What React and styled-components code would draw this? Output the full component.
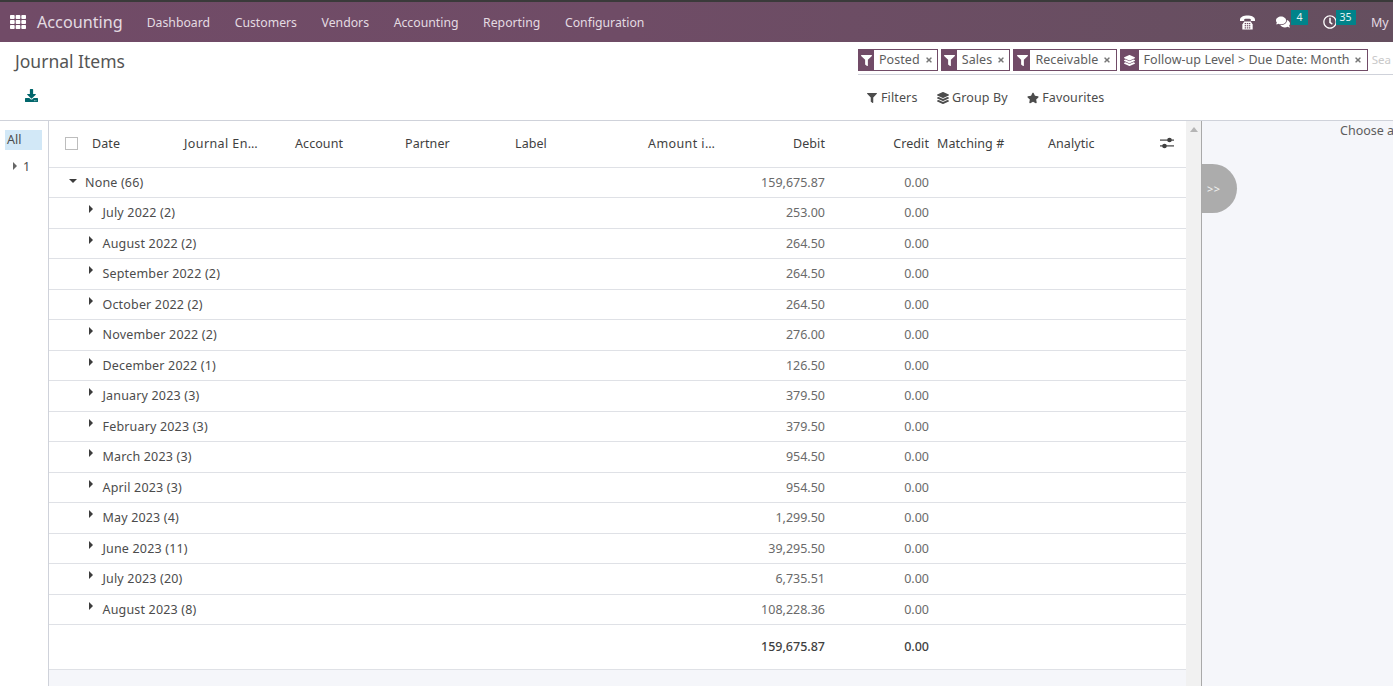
import React from 'react';
import styled, { createGlobalStyle } from 'styled-components';
import {
  FaTh,
  FaFilter,
  FaLayerGroup,
  FaStar,
  FaDownload,
  FaComments,
  FaRegClock,
  FaTimes,
} from 'react-icons/fa';

const GlobalStyle = createGlobalStyle`
  html, body {
    margin: 0;
    height: 100%;
    overflow: hidden;
    background: #fff;
    font-family: "Noto Sans", "Open Sans", sans-serif;
    font-size: 12.5px;
    color: #4c4c4c;
  }
  #root { height: 100%; }
`;

const Page = styled.div`
  display: flex;
  flex-direction: column;
  width: 1393px;
  height: 686px;
  overflow: hidden;
`;

const NavBar = styled.header`
  display: flex;
  align-items: center;
  flex: none;
  height: 40px;
  border-top: 2px solid #3a3a3a;
  background: linear-gradient(90deg, #714b67 0%, #6f4c66 45%, #654f5f 100%);
  color: #fff;
  overflow: hidden;
`;

const AppsButton = styled.div`
  display: flex;
  padding: 0 11px 0 10px;
  font-size: 16px;
  color: #fff;
`;

const Brand = styled.div`
  margin-right: 12px;
  font-size: 16.2px;
  color: #e4dbe2;
`;

const NavLink = styled.div`
  padding: 0 12.6px 0 12px;
  font-size: 12.25px;
  color: #e4dbe2;
`;

const NavRight = styled.div`
  display: flex;
  align-items: center;
  margin-left: auto;
  width: 153px;
  flex: none;
`;

const NavIcon = styled.div`
  position: relative;
  display: flex;
  margin-right: ${(props) => props.$gap}px;
  font-size: 14px;
  color: #fff;
`;

const Badge = styled.span`
  position: absolute;
  top: -5px;
  left: ${(props) => props.$left}px;
  width: ${(props) => props.$width}px;
  height: 15px;
  line-height: 14px;
  font-size: 10.5px;
  text-align: center;
  background: #00838a;
  color: #e8f4f4;
`;

const NavUser = styled.span`
  font-size: 12.5px;
  color: #e4dbe2;
  white-space: nowrap;
`;

const ControlPanel = styled.section`
  display: grid;
  grid-template-columns: 858px 1fr;
  flex: none;
  height: 78px;
  border-bottom: 1px solid #cfd2da;
`;

const PanelLeft = styled.div`
  display: flex;
  flex-direction: column;
  padding: 9px 0 0 15px;
`;

const Title = styled.h1`
  margin: 0;
  font-size: 17.5px;
  line-height: 21px;
  font-weight: 400;
  color: #555;
`;

const DownloadButton = styled.div`
  display: flex;
  margin: 17px 0 0 10px;
  font-size: 13px;
  color: #01666b;
`;

const PanelRight = styled.div`
  display: flex;
  flex-direction: column;
  overflow: hidden;
`;

const SearchBar = styled.div`
  display: flex;
  align-items: flex-start;
  gap: 3px;
  height: 25px;
  margin-top: 7px;
  border-bottom: 1px solid #cfd2da;
  white-space: nowrap;
`;

const Facet = styled.div`
  display: flex;
  align-items: center;
  height: 20px;
  border: 1px solid #714b67;
  background: #fff;
  flex: none;
`;

const FacetIcon = styled.span`
  display: flex;
  align-items: center;
  justify-content: center;
  width: ${(props) => props.$width}px;
  height: 100%;
  background: #714b67;
  color: #fff;
  font-size: 11px;
`;

const FacetLabel = styled.span`
  padding: 0 5px;
  font-size: 12.5px;
  line-height: 20px;
  letter-spacing: 0.05px;
  color: #5d5d5d;
`;

const FacetClose = styled.span`
  display: flex;
  margin-right: 4.2px;
  font-size: 8px;
  color: #777;
`;

const SearchHint = styled.span`
  margin-left: 1px;
  line-height: 21px;
  font-size: 11.5px;
  color: #c9c9c9;
`;

const SearchMenus = styled.div`
  display: flex;
  gap: 19.5px;
  margin-top: 14px;
  padding-left: 9px;
`;

const MenuItem = styled.div`
  display: flex;
  align-items: center;
  gap: ${(props) => props.$gap}px;
  font-size: 12.5px;
  letter-spacing: 0.12px;
  color: #4c4c4c;
`;

const Body = styled.main`
  display: grid;
  grid-template-columns: 49px 1137px 15px 1fr;
  flex: 1;
  min-height: 0;
`;

const SidePanel = styled.aside`
  display: flex;
  flex-direction: column;
  padding: 9px 6px 0 5px;
  border-right: 1px solid #cfd2da;
`;

const SideItem = styled.div`
  display: flex;
  align-items: center;
  gap: 6px;
  height: 20px;
  box-sizing: border-box;
  padding-bottom: 2px;
  margin-bottom: ${(props) => (props.$active ? '7px' : '0')};
  padding-left: ${(props) => (props.$active ? '2px' : '8px')};
  background: ${(props) => (props.$active ? '#d2e8f7' : 'transparent')};
  font-size: 12.5px;
  color: #4c4c4c;
`;

const CaretRight = styled.span`
  display: block;
  flex: none;
  width: 0;
  height: 0;
  border-top: 4px solid transparent;
  border-bottom: 4px solid transparent;
  border-left: 4px solid ${(props) => props.$color || '#3c3c3c'};
`;

const CaretDown = styled.span`
  display: block;
  width: 0;
  height: 0;
  border-left: 4px solid transparent;
  border-right: 4px solid transparent;
  border-top: 4px solid #3c3c3c;
`;

const ListArea = styled.div`
  display: flex;
  flex-direction: column;
  background: #f5f6fa;
`;

const COLUMNS = '35px 92px 111px 110px 110px 133px 84px 109px 96px 111px 110px 36px';

const HeaderRow = styled.div`
  display: grid;
  grid-template-columns: ${COLUMNS};
  align-items: center;
  height: 46.5px;
  padding-bottom: 1px;
  flex: none;
  background: #fff;
  border-bottom: 1px solid #dfe1e6;
  box-sizing: border-box;
  font-size: 12.5px;
  letter-spacing: 0.08px;
  color: #3f3f3f;
`;

const HeaderCell = styled.div`
  padding: 0 ${(props) => (props.$flush ? '0' : '8px')};
  text-align: ${(props) => (props.$right ? 'right' : 'left')};
  letter-spacing: ${(props) => (props.$cut ? '0.4px' : 'inherit')};
  white-space: nowrap;
`;

const CheckBox = styled.span`
  display: block;
  width: 11px;
  height: 11px;
  margin-left: 16px;
  border: 1px solid #bdbdbd;
  background: #fff;
`;

const OptionsCell = styled.div`
  display: flex;
  padding-left: 10px;
`;

const GroupRow = styled.div`
  display: grid;
  grid-template-columns: 675px 109px 96px 1fr;
  align-items: center;
  height: 30.5px;
  flex: none;
  box-sizing: border-box;
  background: #fff;
  border-bottom: 1px solid #dfe1e6;
  font-size: 12.5px;
  letter-spacing: 0.17px;
  color: #4c4c4c;
`;

const GroupName = styled.div`
  position: relative;
  padding-left: ${(props) => (props.$open ? '36px' : '53.5px')};
`;

const CaretSlot = styled.span`
  position: absolute;
  top: ${(props) => (props.$open ? '5px' : '1px')};
  left: ${(props) => (props.$open ? '20px' : '40px')};
`;

const Amount = styled.div`
  padding-right: ${(props) => (props.$flush ? '0' : '8px')};
  text-align: right;
  letter-spacing: 0;
  color: #6a6a6a;
`;

const TotalRow = styled(GroupRow)`
  height: 45px;
  padding-bottom: 2px;
  font-weight: 500;
  color: #3f3f3f;

  ${Amount} {
    color: #3f3f3f;
  }
`;

const ScrollTrack = styled.div`
  display: flex;
  justify-content: center;
  padding-top: 6px;
  background: #f1f1f1;
`;

const ScrollArrow = styled.span`
  width: 0;
  height: 0;
  border-left: 4px solid transparent;
  border-right: 4px solid transparent;
  border-bottom: 5px solid #b5b5b5;
`;

const RightPane = styled.aside`
  position: relative;
  border-left: 1px solid #a9a9a9;
  background: #f5f6fa;
  overflow: hidden;
`;

const ChooseText = styled.div`
  padding: 1px 0 0 138px;
  font-size: 12.5px;
  line-height: 18px;
  color: #5d5d5d;
  white-space: nowrap;
`;

const ToggleButton = styled.div`
  position: absolute;
  top: 43px;
  left: 0;
  display: flex;
  align-items: center;
  width: 35px;
  height: 49px;
  padding-left: 5px;
  box-sizing: border-box;
  border-radius: 0 25px 25px 0;
  background: #acacac;
  color: #f2f2f2;
  font-size: 11px;
  letter-spacing: 0.5px;
`;

const PhoneIcon = () => (
  <svg width="15" height="15" viewBox="0 0 16 16" fill="#fff">
    <path d="M0 5C0 2 4 .5 8 .5s8 1.500 8 4.500v1.500h-4.500V4.500c-1-.5-6-.5-7 0v2H0z" />
    <path d="M4.500 7h7l2 3v5.500h-11V10z" />
    <g fill="#6b4e63">
      <rect x="5" y="8.500" width="1.500" height="1.300" />
      <rect x="7.300" y="8.500" width="1.500" height="1.300" />
      <rect x="9.500" y="8.500" width="1.500" height="1.300" />
      <rect x="5" y="10.800" width="1.500" height="1.300" />
      <rect x="7.300" y="10.800" width="1.500" height="1.300" />
      <rect x="9.500" y="10.800" width="1.500" height="1.300" />
      <rect x="5" y="13.100" width="1.500" height="1.300" />
      <rect x="7.300" y="13.100" width="1.500" height="1.300" />
      <rect x="9.500" y="13.100" width="1.500" height="1.300" />
    </g>
  </svg>
);

const SlidersIcon = () => (
  <svg width="14" height="12" viewBox="0 0 14 12" fill="#3f3f3f">
    <rect x="0" y="2.500" width="14" height="1.200" />
    <rect x="0" y="8.300" width="14" height="1.200" />
    <circle cx="9.500" cy="3" r="2.300" />
    <circle cx="4.500" cy="9" r="2.300" />
  </svg>
);

const navLinks = ['Dashboard', 'Customers', 'Vendors', 'Accounting', 'Reporting', 'Configuration'];

const facets = [
  { label: 'Posted', icon: <FaFilter />, width: 15 },
  { label: 'Sales', icon: <FaFilter />, width: 15 },
  { label: 'Receivable', icon: <FaFilter />, width: 16 },
  { label: 'Follow-up Level > Due Date: Month', icon: <FaLayerGroup />, width: 18 },
];

const groups = [
  ['July 2022 (2)', '253.00'],
  ['August 2022 (2)', '264.50'],
  ['September 2022 (2)', '264.50'],
  ['October 2022 (2)', '264.50'],
  ['November 2022 (2)', '276.00'],
  ['December 2022 (1)', '126.50'],
  ['January 2023 (3)', '379.50'],
  ['February 2023 (3)', '379.50'],
  ['March 2023 (3)', '954.50'],
  ['April 2023 (3)', '954.50'],
  ['May 2023 (4)', '1,299.50'],
  ['June 2023 (11)', '39,295.50'],
  ['July 2023 (20)', '6,735.51'],
  ['August 2023 (8)', '108,228.36'],
];

export default function App() {
  return (
    <Page>
      <GlobalStyle />
      <NavBar>
        <AppsButton>
          <FaTh />
        </AppsButton>
        <Brand>Accounting</Brand>
        {navLinks.map((link) => (
          <NavLink key={link}>{link}</NavLink>
        ))}
        <NavRight>
          <NavIcon $gap={21}>
            <PhoneIcon />
          </NavIcon>
          <NavIcon $gap={32.5}>
            <FaComments />
            <Badge $left={15} $width={17}>
              4
            </Badge>
          </NavIcon>
          <NavIcon $gap={34.5}>
            <FaRegClock />
            <Badge $left={13} $width={20}>
              35
            </Badge>
          </NavIcon>
          <NavUser>My</NavUser>
        </NavRight>
      </NavBar>

      <ControlPanel>
        <PanelLeft>
          <Title>Journal Items</Title>
          <DownloadButton>
            <FaDownload />
          </DownloadButton>
        </PanelLeft>
        <PanelRight>
          <SearchBar>
            {facets.map((facet) => (
              <Facet key={facet.label}>
                <FacetIcon $width={facet.width}>{facet.icon}</FacetIcon>
                <FacetLabel>{facet.label}</FacetLabel>
                <FacetClose>
                  <FaTimes />
                </FacetClose>
              </Facet>
            ))}
            <SearchHint>Sea</SearchHint>
          </SearchBar>
          <SearchMenus>
            <MenuItem $gap={4}>
              <FaFilter size={10} />
              Filters
            </MenuItem>
            <MenuItem $gap={3}>
              <FaLayerGroup size={12} />
              Group By
            </MenuItem>
            <MenuItem $gap={3}>
              <FaStar size={12} />
              Favourites
            </MenuItem>
          </SearchMenus>
        </PanelRight>
      </ControlPanel>

      <Body>
        <SidePanel>
          <SideItem $active>All</SideItem>
          <SideItem>
            <CaretRight $color="#666" />1
          </SideItem>
        </SidePanel>

        <ListArea>
          <HeaderRow>
            <HeaderCell $flush>
              <CheckBox />
            </HeaderCell>
            <HeaderCell>Date</HeaderCell>
            <HeaderCell $cut>Journal En…</HeaderCell>
            <HeaderCell>Account</HeaderCell>
            <HeaderCell>Partner</HeaderCell>
            <HeaderCell>Label</HeaderCell>
            <HeaderCell $cut>Amount i…</HeaderCell>
            <HeaderCell $right>Debit</HeaderCell>
            <HeaderCell $right $flush>
              Credit
            </HeaderCell>
            <HeaderCell>Matching #</HeaderCell>
            <HeaderCell>Analytic</HeaderCell>
            <OptionsCell>
              <SlidersIcon />
            </OptionsCell>
          </HeaderRow>
          <GroupRow>
            <GroupName $open>
              <CaretSlot $open>
                <CaretDown />
              </CaretSlot>
              None (66)
            </GroupName>
            <Amount>159,675.87</Amount>
            <Amount $flush>0.00</Amount>
          </GroupRow>
          {groups.map(([name, debit]) => (
            <GroupRow key={name}>
              <GroupName>
                <CaretSlot>
                  <CaretRight />
                </CaretSlot>
                {name}
              </GroupName>
              <Amount>{debit}</Amount>
              <Amount $flush>0.00</Amount>
            </GroupRow>
          ))}
          <TotalRow>
            <div />
            <Amount>159,675.87</Amount>
            <Amount $flush>0.00</Amount>
          </TotalRow>
        </ListArea>

        <ScrollTrack>
          <ScrollArrow />
        </ScrollTrack>

        <RightPane>
          <ChooseText>Choose a</ChooseText>
          <ToggleButton>&gt;&gt;</ToggleButton>
        </RightPane>
      </Body>
    </Page>
  );
}
